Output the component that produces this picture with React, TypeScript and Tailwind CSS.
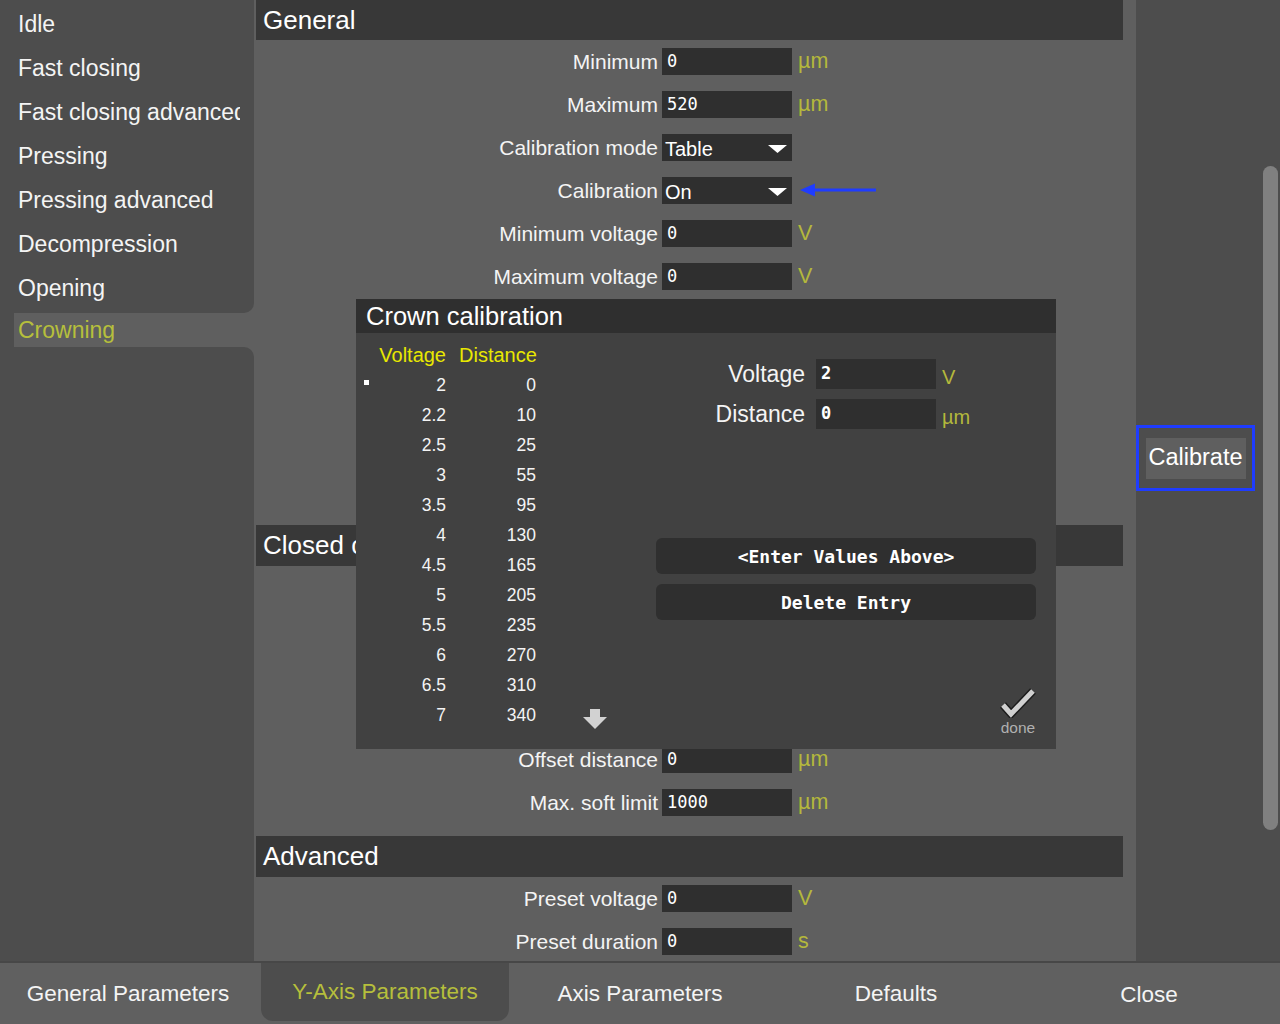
import React from "react";

type Row = {
  label: string;
  value: string;
  unit?: string;
  select?: boolean;
  arrow?: boolean;
  hidden?: boolean;
};

const general: Row[] = [
  { label: "Minimum", value: "0", unit: "µm" },
  { label: "Maximum", value: "520", unit: "µm" },
  { label: "Calibration mode", value: "Table", select: true },
  { label: "Calibration", value: "On", select: true, arrow: true },
  { label: "Minimum voltage", value: "0", unit: "V" },
  { label: "Maximum voltage", value: "0", unit: "V" },
  { label: "Offset", value: "0", unit: "µm", hidden: true },
  { label: "Gain", value: "1", hidden: true },
  { label: "Step size", value: "10", unit: "µm", hidden: true },
  { label: "Ramp time", value: "0", unit: "s", hidden: true },
  { label: "Hold time", value: "0", unit: "s", hidden: true },
];

const closed: Row[] = [
  { label: "Proportional gain", value: "0", hidden: true },
  { label: "Integral gain", value: "0", hidden: true },
  { label: "Derivative gain", value: "0", hidden: true },
  { label: "Tolerance", value: "5", unit: "µm", hidden: true },
  { label: "Offset distance", value: "0", unit: "µm" },
  { label: "Max. soft limit", value: "1000", unit: "µm" },
];

const advanced: Row[] = [
  { label: "Preset voltage", value: "0", unit: "V" },
  { label: "Preset duration", value: "0", unit: "s" },
];

const menu = [
  "Idle",
  "Fast closing",
  "Fast closing advanced",
  "Pressing",
  "Pressing advanced",
  "Decompression",
  "Opening",
];

const table: [string, string][] = [
  ["2", "0"],
  ["2.2", "10"],
  ["2.5", "25"],
  ["3", "55"],
  ["3.5", "95"],
  ["4", "130"],
  ["4.5", "165"],
  ["5", "205"],
  ["5.5", "235"],
  ["6", "270"],
  ["6.5", "310"],
  ["7", "340"],
];

const tabs = [
  "General Parameters",
  "Y-Axis Parameters",
  "Axis Parameters",
  "Defaults",
  "Close",
];

const Caret = () => (
  <svg width="19" height="8" viewBox="0 0 19 8" className="ml-auto mr-[5px]">
    <polygon points="0,0 19,0 9.5,8" fill="#ffffff" />
  </svg>
);

const FormRow = ({ row }: { row: Row }) => (
  <div className={`flex items-center h-[27px] ${row.hidden ? "invisible" : ""}`}>
    <div className="w-[404px] text-right text-[21px] leading-none text-[#f4f4f4] whitespace-nowrap">
      {row.label}
    </div>
    {row.select ? (
      <div className="ml-[4px] w-[130px] h-[27px] bg-[#2f2f2f] flex items-center pl-[3px] pt-[2px] text-[20px] text-white">
        {row.value}
        <Caret />
      </div>
    ) : (
      <div className="ml-[4px] w-[130px] h-[27px] bg-[#2f2f2f] flex items-center pl-[5px] font-['DejaVu_Sans_Mono',monospace] text-[17px] text-white">
        {row.value}
      </div>
    )}
    {row.unit && (
      <div className="ml-[6px] text-[21.5px] text-[#b4b83c] leading-none">
        {row.unit}
      </div>
    )}
    {row.arrow && (
      <svg width="78" height="14" viewBox="0 0 78 14" className="ml-[8px] mb-[2px]">
        <polygon points="0,7 15,0.5 15,13.5" fill="#1f3cff" />
        <rect x="12" y="5.5" width="64" height="3" fill="#1f3cff" />
      </svg>
    )}
  </div>
);

const Section = ({
  title,
  rows,
  tall,
  clip,
}: {
  title: string;
  rows: Row[];
  tall?: boolean;
  clip?: boolean;
}) => (
  <div className="flex flex-col pb-[20px]">
    <div
      className={`ml-[2px] w-[867px] bg-[#383838] flex items-center pl-[7px] text-[26px] text-white ${
        tall ? "h-[41px]" : "h-[40px]"
      }`}
    >
      <div className={clip ? "w-[93px] overflow-hidden whitespace-nowrap" : ""}>
        {title}
      </div>
    </div>
    <div className="flex flex-col gap-[16px] pt-[8px]">
      {rows.map((r) => (
        <FormRow key={r.label} row={r} />
      ))}
    </div>
  </div>
);

const Sidebar = () => (
  <div className="w-[254px] flex flex-col bg-[#5f5f5f]">
    <div className="bg-[#4d4d4d] rounded-br-[10px] pt-[2px] pb-[3px]">
      {menu.map((m) => (
        <div
          key={m}
          className="h-[44px] w-[240px] pl-[18px] flex items-center text-[23px] text-[#f4f4f4] whitespace-nowrap overflow-hidden"
        >
          {m}
        </div>
      ))}
    </div>
    <div className="h-[34px] flex bg-[#4d4d4d]">
      <div className="w-[14px]" />
      <div className="flex-1 bg-[#5f5f5f] pl-[4px] flex items-center text-[23px] text-[#b6bf3c]">
        Crowning
      </div>
    </div>
    <div className="flex-1 bg-[#4d4d4d] rounded-tr-[10px]" />
  </div>
);

const DownArrow = () => (
  <svg width="24" height="21" viewBox="0 0 24 21" className="ml-[47px] mt-[8px]">
    <rect x="7" y="0" width="10" height="9" fill="#d2d2d2" />
    <polygon points="0,8 24,8 12,20" fill="#d2d2d2" />
  </svg>
);

const Popup = () => (
  <div className="absolute left-[356px] top-[299px] w-[700px] h-[450px] flex flex-col">
    <div className="h-[34px] bg-[#2f2f2f] flex items-center pl-[10px] text-[25.5px] text-white">
      Crown calibration
    </div>
    <div className="flex-1 bg-[#414141] flex">
      <div className="w-[300px] pt-[7px] flex flex-col">
        <div className="h-[30px] flex items-center text-[20px] text-[#e8e800]">
          <div className="w-[20px]" />
          <div className="w-[70px] text-right">Voltage</div>
          <div className="ml-[13px] w-[77px] text-right">Distance</div>
        </div>
        {table.map(([v, d], i) => (
          <div
            key={v}
            className="h-[30px] flex items-center text-[17.5px] text-[#f4f4f4]"
          >
            <div className="w-[20px] self-start">
              {i === 0 && (
                <div className="mt-[10px] ml-[8px] w-[5px] h-[5px] bg-white" />
              )}
            </div>
            <div className="w-[70px] text-right">{v}</div>
            <div className="ml-[13px] w-[77px] text-right">{d}</div>
            {i === table.length - 1 && <DownArrow />}
          </div>
        ))}
      </div>
      <div className="w-[380px] flex flex-col pt-[26px]">
        <div className="flex flex-col gap-[10px]">
          {[
            ["Voltage", "2", "V"],
            ["Distance", "0", "µm"],
          ].map(([l, v, u]) => (
            <div key={l} className="flex items-center h-[30px]">
              <div className="w-[149px] text-right text-[23px] text-[#f4f4f4] leading-none">
                {l}
              </div>
              <div className="ml-[11px] w-[120px] h-[30px] bg-[#2f2f2f] flex items-center pl-[5px] font-['DejaVu_Sans_Mono',monospace] font-bold text-[17px] text-white">
                {v}
              </div>
              <div className="ml-[6px] mt-[5px] text-[20px] text-[#b4b83c] leading-none">
                {u}
              </div>
            </div>
          ))}
        </div>
        <div className="mt-[109px] flex flex-col gap-[10px]">
          {["<Enter Values Above>", "Delete Entry"].map((b) => (
            <div
              key={b}
              className="h-[36px] rounded-[6px] bg-[#2f2f2f] flex items-center justify-center font-['DejaVu_Sans_Mono',monospace] font-bold text-[18px] text-white whitespace-pre"
            >
              {b}
            </div>
          ))}
        </div>
        <div className="mt-auto self-end mr-[-2px] pb-[14px] flex flex-col items-center w-[40px]">
          <svg width="38" height="32" viewBox="0 0 38 32">
            <polyline
              points="4,19 12,28 34,5"
              fill="none"
              stroke="#1c1c1c"
              strokeWidth="8"
              strokeLinejoin="miter"
            />
            <polyline
              points="4,19 12,28 34,5"
              fill="none"
              stroke="#d0d0d0"
              strokeWidth="5"
              strokeLinejoin="miter"
            />
          </svg>
          <div className="mt-[2px] text-[15.5px] leading-none text-[#b0b0b0]">
            done
          </div>
        </div>
      </div>
    </div>
  </div>
);

export default function App() {
  return (
    <div className="relative w-[1280px] h-[1024px] overflow-hidden flex flex-col bg-[#4d4d4d] font-['Liberation_Sans',Arial,sans-serif]">
      <div className="h-[961px] flex">
        <Sidebar />
        <div className="w-[882px] bg-[#5f5f5f] flex flex-col overflow-hidden">
          <Section title="General" rows={general} />
          <Section title="Closed crowning" rows={closed} tall clip />
          <Section title="Advanced" rows={advanced} tall />
        </div>
        <div className="flex-1 flex">
          <div className="w-[127px] pt-[425px]">
            <div className="w-[119px] h-[66px] border-[3px] border-[#1f3cff] flex items-center justify-center">
              <div className="w-[100px] h-[41px] bg-[#5f5f5f] flex items-center justify-center text-[23.5px] text-white">
                Calibrate
              </div>
            </div>
          </div>
          <div className="w-[15px] mt-[166px] h-[664px] rounded-full bg-[#808080]" />
        </div>
      </div>
      <div className="h-[63px] border-t-[2px] border-[#474747] bg-[#606060] grid grid-cols-5">
        {tabs.map((t, i) => (
          <div key={t} className="flex">
            {i === 1 ? (
              <div className="flex-1 ml-[5px] mr-[3px] mb-[3px] rounded-b-[12px] bg-[#4d4d4d] flex items-center justify-center text-[22.5px] text-[#b6bf3c]">
                {t}
              </div>
            ) : (
              <div
                className={`flex-1 flex items-center justify-center text-[22.5px] text-[#f4f4f4] ${
                  i === 4 ? "pt-[3px] pr-[6px]" : ""
                }`}
              >
                {t}
              </div>
            )}
          </div>
        ))}
      </div>
      <Popup />
    </div>
  );
}
